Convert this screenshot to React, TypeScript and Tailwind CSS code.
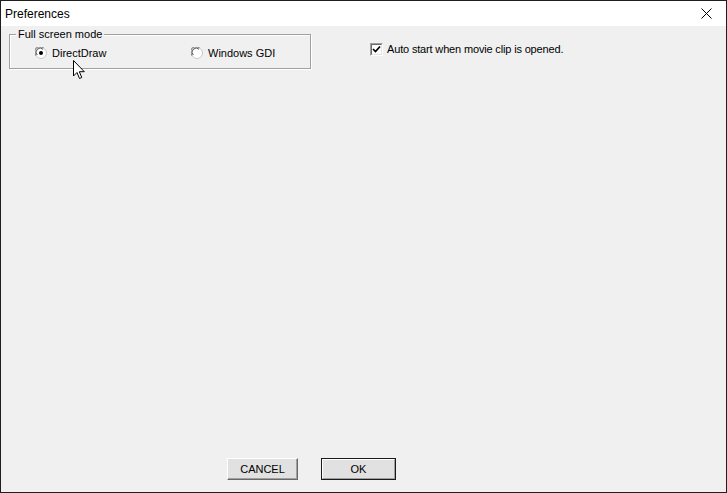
import React from 'react'

const font = { fontFamily: '"Liberation Sans", Arial, sans-serif' }

function Radio({ checked }: { checked?: boolean }) {
  return (
    <svg width="12" height="12" viewBox="0 0 12 12" className="shrink-0">
      <circle cx="6" cy="6" r="5.5" fill="#fff" stroke="#c8c8c8" />
      <path d="M1.2 8.5 A5 5 0 0 1 8.5 1.2" fill="none" stroke="#8a8a8a" strokeWidth="1.1" />
      <path d="M2.3 8 A4 4 0 0 1 8 2.3" fill="none" stroke="#5a5a5a" strokeWidth="1" />
      {checked && <circle cx="6" cy="6" r="2" fill="#000" />}
    </svg>
  )
}

function Checkbox() {
  return (
    <div className="w-[13px] h-[13px] shrink-0 border border-t-[#a0a0a0] border-l-[#a0a0a0] border-b-white border-r-white">
      <div className="w-full h-full bg-white border border-t-[#696969] border-l-[#696969] border-b-[#e3e3e3] border-r-[#e3e3e3] flex items-center justify-center">
        <svg width="9" height="9" viewBox="0 0 9 9">
          <path d="M1 4 L3.5 6.5 L8 1.5" fill="none" stroke="#000" strokeWidth="1.7" />
        </svg>
      </div>
    </div>
  )
}

function Cursor() {
  return (
    <svg width="13" height="20" viewBox="0 0 13 20" className="absolute left-[72px] top-[34px]">
      <path
        d="M0.5 0.5 L0.5 16 L4 12.5 L6.5 18.5 L8.8 17.5 L6.3 11.7 L11.3 11.7 Z"
        fill="#fff"
        stroke="#000"
        strokeWidth="1"
        strokeLinejoin="miter"
      />
    </svg>
  )
}

export default function App() {
  return (
    <div
      className="w-[727px] h-[493px] border border-[#1f1f1f] bg-[#f0f0f0] flex flex-col text-[11px] text-black"
      style={font}
    >
      <div className="h-[25px] bg-white flex items-center justify-between pl-[4px] pr-[14px] shrink-0">
        <span className="text-[12px] pt-[1px]">Preferences</span>
        <svg width="11" height="11" viewBox="0 0 11 11">
          <path d="M0.5 0.5 L10.5 10.5 M10.5 0.5 L0.5 10.5" stroke="#000" strokeWidth="1" />
        </svg>
      </div>

      <div className="relative flex-1 flex flex-col">
        <div className="flex items-start pt-[8px] pl-[8px]">
          <div className="relative w-[302px] h-[35px] border border-[#a0a0a0] shadow-[inset_1px_1px_0_#fff,1px_1px_0_#fff]">
            <span className="absolute left-[6px] top-[-8px] bg-[#f0f0f0] px-[2px] leading-[14px]">
              Full screen mode
            </span>
            <div className="flex items-center h-[14px] mt-[11px] pl-[25px]">
              <div className="flex items-center gap-[5px] w-[156px]">
                <Radio checked />
                <span>DirectDraw</span>
              </div>
              <div className="flex items-center gap-[5px]">
                <Radio />
                <span>Windows GDI</span>
              </div>
            </div>
          </div>
          <div className="flex items-center gap-[4px] ml-[59px] mt-[9px] h-[13px]">
            <Checkbox />
            <span className="tracking-[-0.16px]">Auto start when movie clip is opened.</span>
          </div>
        </div>

        <div className="flex-1" />

        <div className="flex gap-[23px] pl-[226px] pb-[12px]">
          <button className="w-[71px] h-[22px] bg-[#e1e1e1] border border-t-white border-l-white border-b-[#696969] border-r-[#696969] shadow-[inset_-1px_-1px_0_#a0a0a0] text-[11px] leading-none">
            CANCEL
          </button>
          <button className="w-[75px] h-[22px] bg-[#e1e1e1] border border-[#1a1a1a] text-[11px] leading-none">
            <div className="w-full h-full border border-t-white border-l-white border-b-[#a0a0a0] border-r-[#a0a0a0] flex items-center justify-center">
              OK
            </div>
          </button>
        </div>

        <Cursor />
      </div>
    </div>
  )
}
